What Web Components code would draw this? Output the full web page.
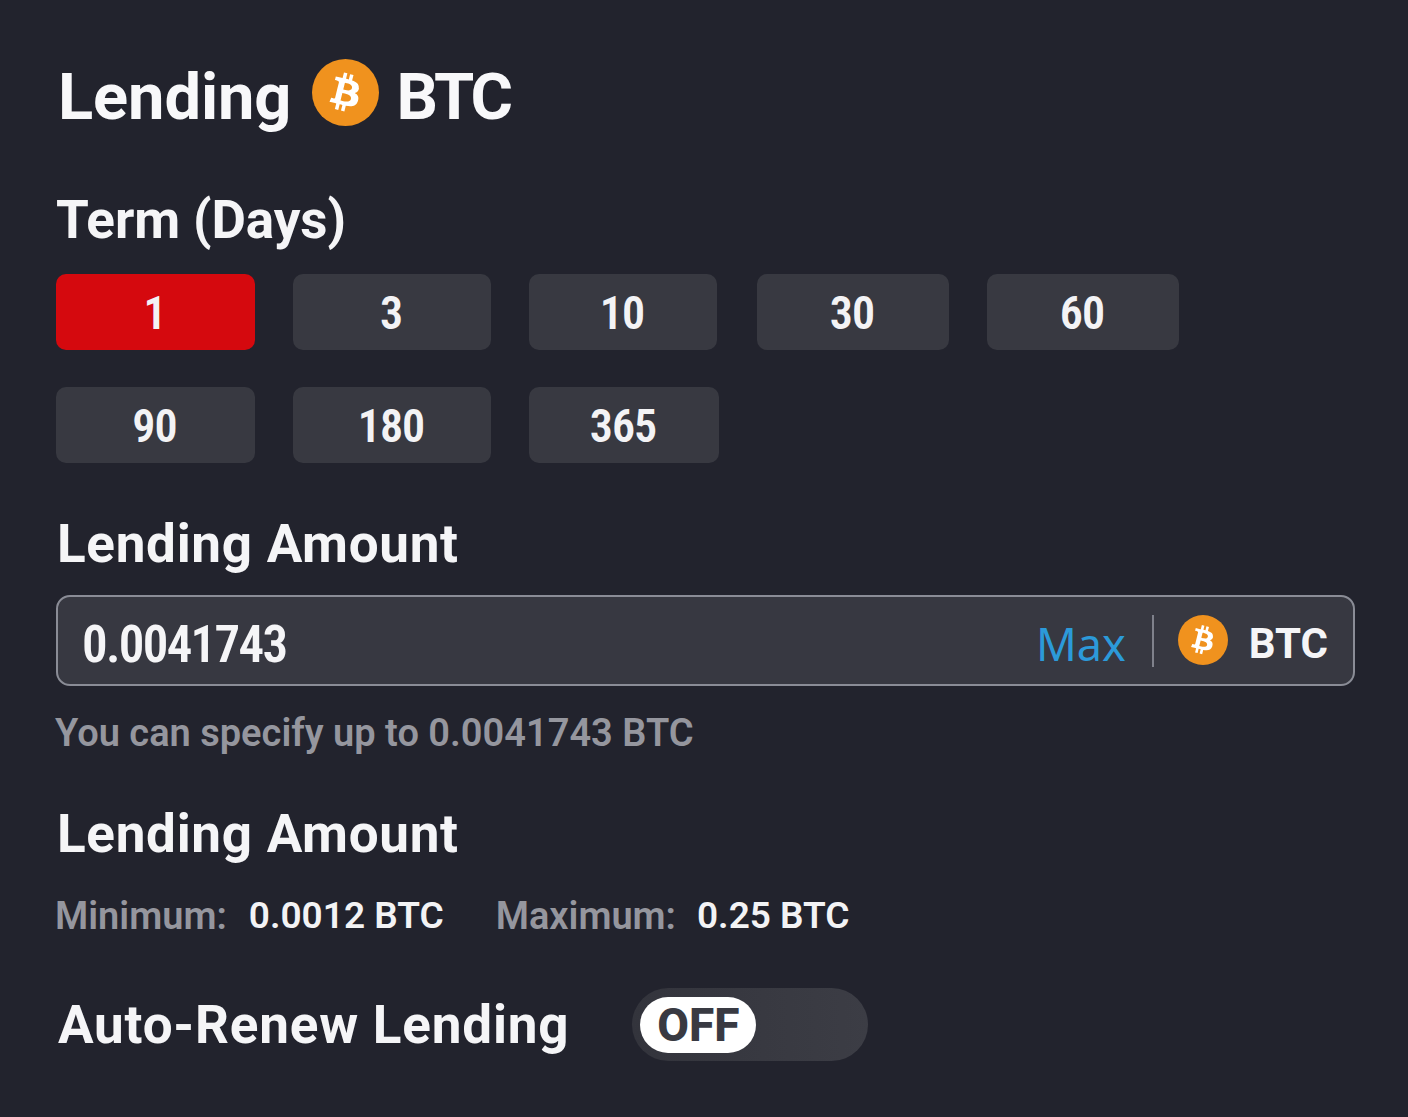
<!DOCTYPE html>
<html>
<head>
<meta charset="utf-8">
<style>
  html, body { margin: 0; background: #22232d; }
  body { font-family: "Noto Sans", sans-serif; color: #f5f5f7; }
</style>
</head>
<body>
<lending-panel></lending-panel>
<script>
const BTC_PATH = 'M46.1 27.4c.6-4.3-2.6-6.6-7.1-8.1l1.5-5.9-3.6-.9-1.4 5.7c-.9-.2-1.9-.5-2.9-.7l1.4-5.8-3.6-.9-1.5 5.9c-.8-.2-1.5-.4-2.3-.5l-4.9-1.2-.9 3.8s2.6.6 2.6.6c1.4.4 1.7 1.3 1.6 2l-1.7 6.7-2.3 9.4c-.2.4-.6 1.1-1.6.8 0 0-2.6-.6-2.6-.6l-1.8 4.1 4.7 1.2c.9.2 1.7.4 2.5.6l-1.5 6 3.6.9 1.5-5.9c1 .3 1.9.5 2.9.7l-1.5 5.9 3.6.9 1.5-6c6.2 1.2 10.8.7 12.8-4.9 1.6-4.5-.1-7.1-3.3-8.8 2.4-.6 4.2-2.1 4.6-5.3zM37.8 39c-1.1 4.5-8.7 2.1-11.1 1.5l2-7.9c2.4.6 10.3 1.8 9.1 6.4zM38.9 27.3c-1 4.1-7.3 2-9.3 1.5l1.8-7.2c2 .5 8.6 1.4 7.5 5.7z';

class BtcIcon extends HTMLElement {
  connectedCallback() {
    const size = this.getAttribute('size') || 50;
    this.attachShadow({mode: 'open'}).innerHTML = `
      <style>
        :host { display: block; width: ${size}px; height: ${size}px; flex: none; }
        svg { display: block; width: 100%; height: 100%; }
      </style>
      <svg viewBox="0 0 64 64"><circle cx="32" cy="32" r="32" fill="#f0921e"/><path fill="#fff" fill-rule="evenodd" transform="translate(3.2 3.2) scale(.9)" d="${BTC_PATH}"/></svg>`;
  }
}
customElements.define('btc-icon', BtcIcon);

class SectionTitle extends HTMLElement {
  constructor() {
    super();
    this.attachShadow({mode: 'open'}).innerHTML = `
      <style>
        :host { display: block; font: 700 53px/60px "Roboto", sans-serif; letter-spacing: .7px; color: #f5f5f7; white-space: nowrap; }
      </style>
      <slot></slot>`;
  }
}
customElements.define('section-title', SectionTitle);

class TermButton extends HTMLElement {
  constructor() {
    super();
    this.attachShadow({mode: 'open'}).innerHTML = `
      <style>
        :host {
          display: flex; align-items: center; justify-content: center;
          height: 76px; padding: 2px 2px 0 0; border-radius: 10px; background: #383941;
          font: 600 46px "Roboto", sans-serif; font-stretch: 78%; letter-spacing: -1px; color: #f3f3f5; box-sizing: border-box;
        }
        :host([active]) { background: #d5090e; }
      </style>
      <slot></slot>`;
  }
}
customElements.define('term-button', TermButton);

class AmountInput extends HTMLElement {
  constructor() {
    super();
    this.attachShadow({mode: 'open'}).innerHTML = `
      <style>
        :host {
          display: flex; align-items: center; height: 91px; box-sizing: border-box;
          border: 2px solid #8a8c96; border-radius: 14px; background: #373841;
          padding: 0 25px 0 24px;
        }
        .value { flex: 1; margin-top: 8px; font: 600 51px "Roboto", sans-serif; font-stretch: 75%; letter-spacing: -1.7px; color: #f5f5f7; }
        .max { margin-top: 6px; font: 400 45px "Noto Sans", sans-serif; color: #2c9ad9; }
        .sep { width: 2px; height: 52px; background: #7f818b; margin: 0 24px 0 26px; }
        btc-icon { margin-bottom: 2px; }
        .unit { margin-top: 5px; font: 700 42px "Roboto", sans-serif; color: #f5f5f7; margin-left: 21px; }
      </style>
      <span class="value"><slot></slot></span>
      <span class="max">Max</span>
      <span class="sep"></span>
      <btc-icon size="50"></btc-icon>
      <span class="unit">BTC</span>`;
  }
}
customElements.define('amount-input', AmountInput);

class ToggleSwitch extends HTMLElement {
  constructor() {
    super();
    this.attachShadow({mode: 'open'}).innerHTML = `
      <style>
        :host {
          display: flex; align-items: center; width: 236px; height: 73px; box-sizing: border-box;
          padding-left: 8px; border-radius: 37px; background: linear-gradient(90deg, #33343c, #3c3d45);
        }
        .knob {
          width: 116px; height: 56px; border-radius: 28px; background: #fff;
          display: flex; align-items: center; justify-content: center;
          font: 800 46px "Roboto", sans-serif; color: #393a42;
        }
      </style>
      <span class="knob"><slot></slot></span>`;
  }
}
customElements.define('toggle-switch', ToggleSwitch);

class LendingPanel extends HTMLElement {
  constructor() {
    super();
    this.attachShadow({mode: 'open'}).innerHTML = `
      <style>
        :host { display: block; width: 1408px; height: 1117px; box-sizing: border-box; padding: 58px 53px 0 56px; overflow: hidden; }
        .head { display: flex; align-items: center; height: 76px; font: 700 65px "Roboto", sans-serif; color: #f8f8fa; }
        .head span { margin-top: 2px; }
        .head .word { margin-left: 2px; letter-spacing: -.1px; }
        .head .unit { letter-spacing: -3px; }
        .head btc-icon { margin: -7px 17px 0 21px; }
        .t1 { margin-top: 56px; letter-spacing: -.1px; }
        .terms { display: flex; flex-wrap: wrap; gap: 37px 38px; margin-top: 24px; }
        .t2 { margin-top: 51px; margin-left: 1px; }
        amount-input { margin-top: 21px; }
        .hint { margin-top: 23px; margin-left: -1px; font: 600 38px/48px "Roboto", sans-serif; color: #95969e; }
        .t3 { margin-top: 47px; margin-left: 1px; }
        .limits { display: flex; margin-top: 28px; margin-left: -1px; font: 600 37px/48px "Roboto", sans-serif; color: #f3f3f5; }
        .limits .k { font-size: 38px; color: #95969e; margin-right: 22px; }
        .limits .k + span + .gap + .k { margin-right: 21px; }
        .limits .gap { width: 52px; }
        .renew { display: flex; align-items: center; margin-top: 48px; margin-left: 2px; }
        .renew section-title { letter-spacing: .8px; }
        .renew toggle-switch { margin-left: 63px; }
      </style>
      <div class="head"><span class="word">Lending</span><btc-icon size="67"></btc-icon><span class="unit">BTC</span></div>
      <section-title class="t1">Term (Days)</section-title>
      <div class="terms">
        <term-button active style="width:199px">1</term-button>
        <term-button style="width:198px">3</term-button>
        <term-button style="width:188px;margin-right:2px">10</term-button>
        <term-button style="width:192px">30</term-button>
        <term-button style="width:192px">60</term-button>
        <term-button style="width:199px">90</term-button>
        <term-button style="width:198px">180</term-button>
        <term-button style="width:190px">365</term-button>
      </div>
      <section-title class="t2">Lending Amount</section-title>
      <amount-input>0.0041743</amount-input>
      <div class="hint">You can specify up to 0.0041743 BTC</div>
      <section-title class="t3">Lending Amount</section-title>
      <div class="limits"><span class="k">Minimum:</span><span>0.0012 BTC</span><span class="gap"></span><span class="k">Maximum:</span><span>0.25 BTC</span></div>
      <div class="renew"><section-title>Auto-Renew Lending</section-title><toggle-switch>OFF</toggle-switch></div>`;
  }
}
customElements.define('lending-panel', LendingPanel);
</script>
</body>
</html>
